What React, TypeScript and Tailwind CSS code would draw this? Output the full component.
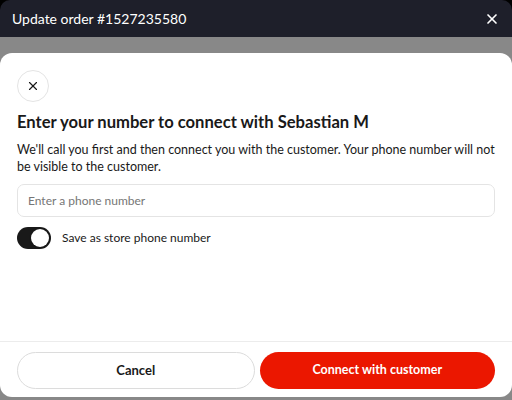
import { X } from "lucide-react";

export default function App() {
  return (
    <div
      className="h-[400px] w-[512px] overflow-hidden bg-black"
      style={{ fontFamily: "Lato, 'Noto Sans', sans-serif" }}
    >
      <div className="flex h-full flex-col overflow-hidden rounded-t-[10px]">
        <div className="flex h-[37px] shrink-0 items-center justify-between bg-[#1e1f2a] pl-3 pr-[12px]">
          <span className="text-[14px] text-white">Update order #1527235580</span>
          <X className="h-[16px] w-[16px] text-white" strokeWidth={2.5} />
        </div>
        <div className="flex flex-1 flex-col bg-[#888888] pt-4 pb-[3px]">
          <div className="flex flex-1 flex-col rounded-[12px] bg-white">
            <div className="flex flex-1 flex-col px-[17px] pt-[17px]">
              <button className="flex h-[32px] w-[32px] items-center justify-center rounded-full border border-[#e4e4e4]">
                <X className="h-[14px] w-[14px] text-[#191919]" strokeWidth={2} />
              </button>
              <h1 className="mt-[8px] text-[16.6px] font-bold leading-[24px] text-[#191919]">
                Enter your number to connect with Sebastian M
              </h1>
              <p className="mt-[7px] text-[12.5px] leading-[17px] text-[#191919]">
                We'll call you first and then connect you with the customer. Your phone number will not be visible to the customer.
              </p>
              <div className="mt-[9px] flex h-[33px] items-center rounded-[7px] border border-[#e4e4e4] px-[10px]">
                <span className="text-[12px] text-[#767676]">Enter a phone number</span>
              </div>
              <div className="mt-[10px] flex items-center gap-[11px]">
                <div className="relative h-[22px] w-[34px] rounded-full bg-[#191919]">
                  <div className="absolute right-[2px] top-[2px] h-[18px] w-[18px] rounded-full bg-white shadow" />
                </div>
                <span className="text-[12px] text-[#191919]">Save as store phone number</span>
              </div>
            </div>
            <div className="flex gap-[5px] border-t border-[#ececec] px-[17px] pb-[8px] pt-[10px]">
              <button className="flex h-[37px] flex-1 items-center justify-center rounded-full border border-[#dcdcdc] text-[13px] font-bold text-[#191919]">
                Cancel
              </button>
              <button className="flex h-[37px] flex-1 items-center justify-center rounded-full bg-[#eb1700] text-[12.5px] font-bold text-white">
                Connect with customer
              </button>
            </div>
          </div>
        </div>
      </div>
    </div>
  );
}
